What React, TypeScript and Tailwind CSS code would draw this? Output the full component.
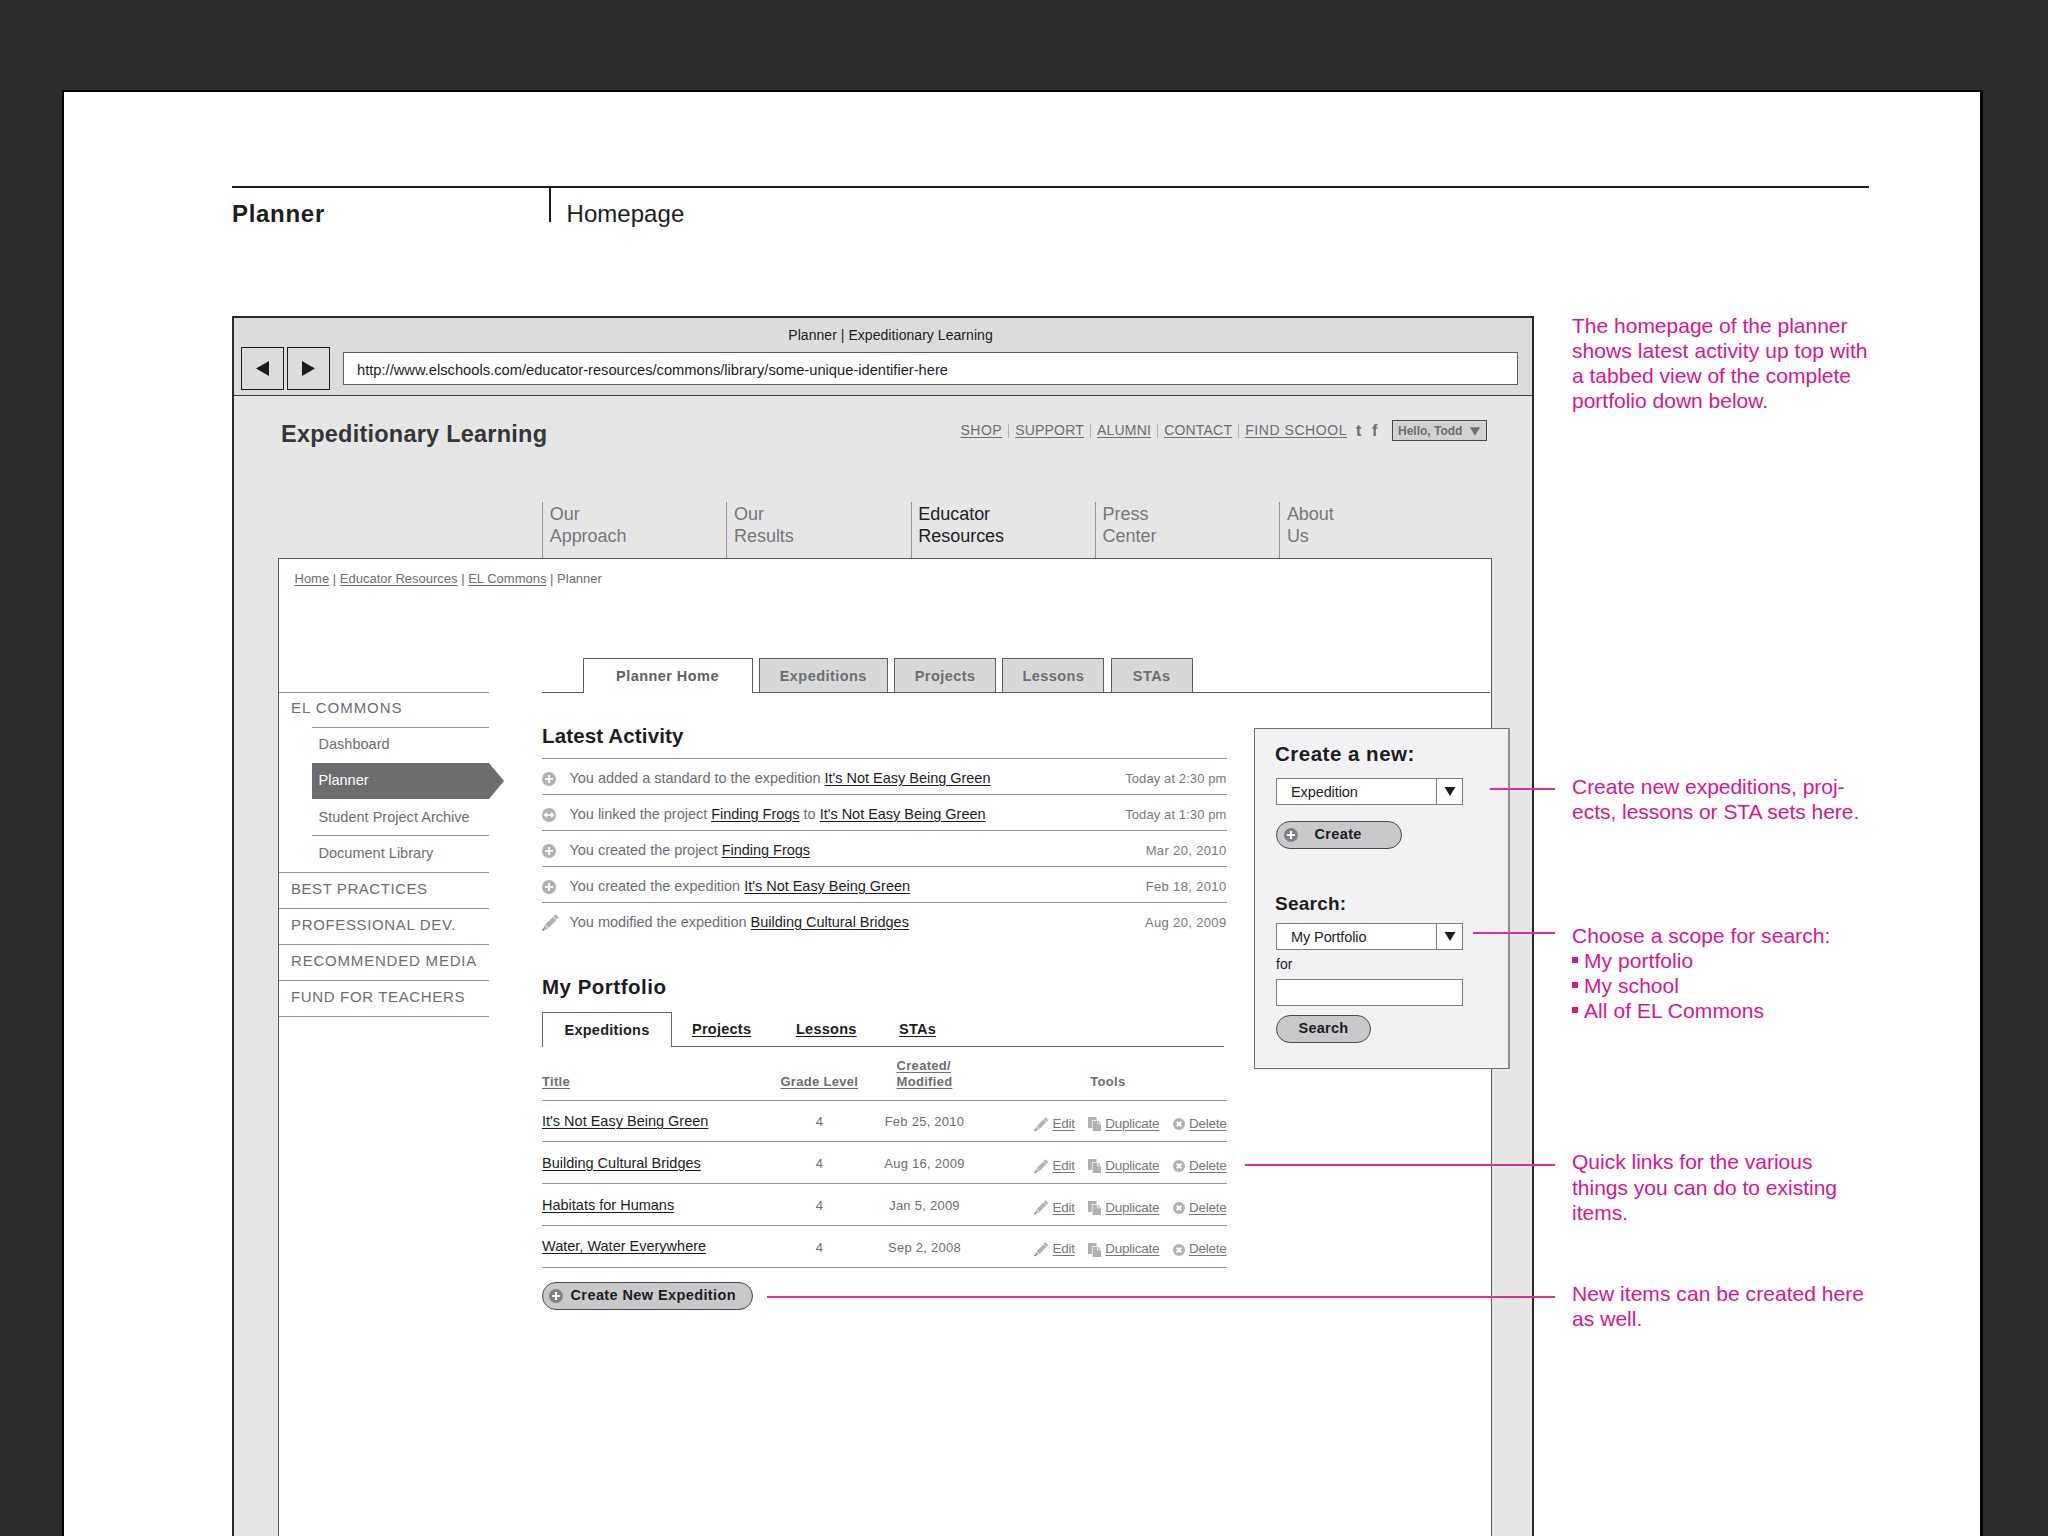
import type { ReactNode } from 'react'
import clsx from 'clsx'

const navItems = [
  ['Our', 'Approach'],
  ['Our', 'Results'],
  ['Educator', 'Resources'],
  ['Press', 'Center'],
  ['About', 'Us'],
]

const topLinks = [
  { label: 'SHOP', tracking: 'tracking-[0.5px]' },
  { label: 'SUPPORT', tracking: 'tracking-[0.2px]' },
  { label: 'ALUMNI', tracking: 'tracking-[0.2px]' },
  { label: 'CONTACT', tracking: 'tracking-[0.2px]' },
  { label: 'FIND SCHOOL', tracking: 'tracking-[0.56px]' },
]

const sections = [
  { label: 'BEST PRACTICES', tracking: 'tracking-[0.55px]' },
  { label: 'PROFESSIONAL DEV.', tracking: 'tracking-[0.65px]' },
  { label: 'RECOMMENDED MEDIA', tracking: 'tracking-[0.8px]' },
  { label: 'FUND FOR TEACHERS', tracking: 'tracking-[0.65px]' },
]

const mainTabs = [
  { label: 'Expeditions', width: 'w-[129px]' },
  { label: 'Projects', width: 'w-[102px]' },
  { label: 'Lessons', width: 'w-[102px]' },
  { label: 'STAs', width: 'w-[82px]' },
]

const portfolio = [
  { title: "It's Not Easy Being Green", grade: 4, date: 'Feb 25, 2010' },
  { title: 'Building Cultural Bridges', grade: 4, date: 'Aug 16, 2009' },
  { title: 'Habitats for Humans', grade: 4, date: 'Jan 5, 2009' },
  { title: 'Water, Water Everywhere', grade: 4, date: 'Sep 2, 2008' },
]

function PlusIcon({ className, fill = '#b1b1b4' }: { className?: string; fill?: string }) {
  return (
    <svg viewBox="0 0 14 14" className={className}>
      <circle cx="7" cy="7" r="7" fill={fill} />
      <path d="M7 3v8M3 7h8" stroke="#fff" strokeWidth="2.1" />
    </svg>
  )
}

function LinkIcon({ className }: { className?: string }) {
  return (
    <svg viewBox="0 0 14 14" className={className}>
      <circle cx="7" cy="7" r="7" fill="#b1b1b4" />
      <path d="M1.3 7 5 3.9V10.1Z M12.7 7 9 3.9V10.1Z" fill="#fff" />
      <path d="M4 7h6" stroke="#fff" strokeWidth="1.7" />
    </svg>
  )
}

function PencilIcon({ className }: { className?: string }) {
  return (
    <svg viewBox="0 0 16 16" className={className}>
      <path d="M12.6 0.3 15.8 3.2 14 5.2 10.8 2.3Z" fill="#b1b1b4" />
      <path d="M10.4 2.7 13.6 5.6 6.2 13.2 2.9 10.2Z" fill="#b1b1b4" />
      <path d="M2.5 10.7 5.6 13.6 2.2 15 1 13.8Z" fill="#b1b1b4" />
      <path d="M1 13.4 2.7 15 0 16Z" fill="#6d6e71" />
    </svg>
  )
}

function CopyIcon({ className }: { className?: string }) {
  return (
    <svg viewBox="0 0 13 14" className={className}>
      <path d="M0 0h8.500v3H3.900v8H0Z" fill="#b1b1b4" />
      <path d="M4.600 3.800H9.300V7.200H13V14H4.600Z" fill="#b1b1b4" />
      <path d="M10 3.800 13 6.500H10Z" fill="#b1b1b4" />
    </svg>
  )
}

function DeleteIcon({ className }: { className?: string }) {
  return (
    <svg viewBox="0 0 12 12" className={className}>
      <circle cx="6" cy="6" r="6" fill="#b1b1b4" />
      <path d="M3.700 3.700l4.600 4.600M8.300 3.700l-4.600 4.600" stroke="#fff" strokeWidth="2" />
    </svg>
  )
}

function DownArrow({ className }: { className?: string }) {
  return (
    <svg viewBox="0 0 12 10" className={className}>
      <path d="M0 0h12L6 10Z" fill="currentColor" />
    </svg>
  )
}

function Item({ children }: { children: ReactNode }) {
  return <span className="text-[#1d1d1f] underline decoration-1 underline-offset-2">{children}</span>
}

function ToolLink({ icon, label }: { icon: ReactNode; label: string }) {
  return (
    <span className="flex items-center gap-[4px]">
      {icon}
      <span className="underline decoration-1 underline-offset-2">{label}</span>
    </span>
  )
}

function ActivityRow({ icon, date, children }: { icon: ReactNode; date: string; children: ReactNode }) {
  const today = date.startsWith('Today')
  return (
    <li className="flex h-9 items-center border-t border-[#97979a] pt-[4px]">
      <span className="w-[27.5px]">{icon}</span>
      <span className="text-[14.5px] tracking-[-0.02px]">{children}</span>
      <span className={clsx('ml-auto text-[13px] text-[#77787b]', today ? 'tracking-[0.1px]' : 'tracking-[0.35px]')}>{date}</span>
    </li>
  )
}

function Select({ value }: { value: string }) {
  return (
    <div className="flex h-[27px] w-[187px] border border-[#808083] bg-white">
      <span className="flex-1 pl-[14px] text-[14.5px] leading-[27px] tracking-[-0.1px]">{value}</span>
      <span className="flex w-[26px] items-center justify-center border-l border-[#808083]">
        <DownArrow className="h-[9px] w-[12px]" />
      </span>
    </div>
  )
}

function Note({ className, line, children }: { className?: string; line?: string; children: ReactNode }) {
  return (
    <div className={clsx('relative', className)}>
      {line && <span className={clsx('absolute right-full mr-[17px] h-[2px] bg-[#dc3098]', line)} />}
      {children}
    </div>
  )
}

function Sidebar() {
  return (
    <nav className="mt-[34px] w-[209.5px] shrink-0 text-[#6d6e71]">
      <div className="h-[35px] border-t border-[#97979a] pl-[12px] text-[15px] leading-[29px] tracking-[0.95px]">EL COMMONS</div>
      <ul className="ml-[33px] text-[14.5px] tracking-[0.02px]">
        <li className="h-[36px] border-t border-[#97979a] pl-[6.5px] leading-[33px]">Dashboard</li>
        <li className="h-[36px] w-[192px] bg-[#6d6d70] pl-[6.5px] leading-[35px] text-white [clip-path:polygon(0_0,177px_0,100%_50%,177px_100%,0_100%)]">
          Planner
        </li>
        <li className="h-[36px] pl-[6.5px] leading-[36px]">Student Project Archive</li>
        <li className="h-[37px] border-t border-[#97979a] pl-[6.5px] leading-[35px]">Document Library</li>
      </ul>
      <ul className="border-b border-[#97979a] text-[15px]">
        {sections.map((s) => (
          <li key={s.label} className={clsx('h-[36.1px] border-t border-[#97979a] pl-[12px] leading-[32px]', s.tracking)}>{s.label}</li>
        ))}
      </ul>
    </nav>
  )
}

function Activity() {
  const plus = <PlusIcon className="mt-px size-[14px]" />
  return (
    <section className="text-[#6d6e71]">
      <h2 className="h-[65px] pt-[28px] text-[20.5px] leading-[30px] font-bold tracking-[0.15px] text-[#1d1d1f]">Latest Activity</h2>
      <ul className="h-[180px]">
        <ActivityRow icon={plus} date="Today at 2:30 pm">
          You added a standard to the expedition <Item>It's Not Easy Being Green</Item>
        </ActivityRow>
        <ActivityRow icon={<LinkIcon className="mt-px size-[14px]" />} date="Today at 1:30 pm">
          You linked the project <Item>Finding Frogs</Item> to <Item>It's Not Easy Being Green</Item>
        </ActivityRow>
        <ActivityRow icon={plus} date="Mar 20, 2010">
          You created the project <Item>Finding Frogs</Item>
        </ActivityRow>
        <ActivityRow icon={plus} date="Feb 18, 2010">
          You created the expedition <Item>It's Not Easy Being Green</Item>
        </ActivityRow>
        <ActivityRow icon={<PencilIcon className="size-[17px]" />} date="Aug 20, 2009">
          You modified the expedition <Item>Building Cultural Bridges</Item>
        </ActivityRow>
      </ul>
    </section>
  )
}

function Portfolio() {
  const cols = 'grid grid-cols-[226px_102.6px_107.8px_1fr]'
  return (
    <section className="text-[#6d6e71]">
      <h2 className="h-[74px] pt-[34px] text-[20.5px] leading-[30px] font-bold tracking-[0.5px] text-[#1d1d1f]">My Portfolio</h2>
      <div className="flex h-[35px] w-[682px] text-[14.5px] leading-[34px] font-bold tracking-[0.25px] text-[#1d1d1f]">
        <span className="w-[130px] border border-b-0 border-[#6b6b6e] text-center">Expeditions</span>
        <span className="flex flex-1 border-b border-[#6b6b6e] pl-[20px] leading-[35px] underline decoration-1 underline-offset-2">
          <span className="w-[104px]">Projects</span>
          <span className="w-[103px]">Lessons</span>
          <span>STAs</span>
        </span>
      </div>
      <div className={clsx(cols, 'h-[52.5px] items-end pb-[9px] text-[13px] leading-[16.3px] font-bold tracking-[0.3px]')}>
        <span className="underline decoration-1 underline-offset-2">Title</span>
        <span className="text-center underline decoration-1 underline-offset-2">Grade Level</span>
        <span className="text-center">
          <span className="inline-block text-left underline decoration-1 underline-offset-2">Created/<br />Modified</span>
        </span>
        <span className="pl-[11px] text-center">Tools</span>
      </div>
      <ul className="border-b border-[#97979a]">
        {portfolio.map((p) => (
          <li key={p.title} className={clsx(cols, 'h-[41.8px] items-center border-t border-[#97979a] pt-[2px]')}>
            <span className="text-[14.5px]"><Item>{p.title}</Item></span>
            <span className="text-center text-[13px]">{p.grade}</span>
            <span className="text-center text-[13px] tracking-[0.25px]">{p.date}</span>
            <span className="ml-auto flex w-[193.5px] justify-between pt-[4.5px] text-[13.5px] tracking-[-0.25px] text-[#77787b]">
              <ToolLink icon={<PencilIcon className="ml-px size-[14.5px]" />} label="Edit" />
              <ToolLink icon={<CopyIcon className="h-[14px] w-[13px]" />} label="Duplicate" />
              <ToolLink icon={<DeleteIcon className="size-[12px]" />} label="Delete" />
            </span>
          </li>
        ))}
      </ul>
      <button className="mt-[14px] flex h-[28px] w-[210.5px] items-center rounded-full border border-[#4a4a4c] bg-[#c9c9cb] pl-[6px] text-[14.5px] font-bold tracking-[0.4px] text-[#1d1d1f]">
        <PlusIcon className="mr-[7.5px] size-[14px]" fill="#808184" />
        Create New Expedition
      </button>
    </section>
  )
}

function CreateBox() {
  return (
    <aside className="mt-[35px] ml-[27px] h-[341px] w-[256px] shrink-0 border border-r-2 border-[#707073] border-r-[#8e8e91] bg-[#f2f2f4] pt-[10px] pl-[21.5px] text-[#1d1d1f]">
      <h3 className="-ml-px text-[20.5px] leading-[30px] font-bold tracking-[0.5px]">Create a new:</h3>
      <div className="mt-[9px]"><Select value="Expedition" /></div>
      <button className="mt-[16px] flex h-[28px] w-[125.5px] items-center rounded-full border border-[#4a4a4c] bg-[#c9c9cb] pl-[6.5px] text-[14.5px] font-bold tracking-[0.36px]">
        <PlusIcon className="mr-[17px] size-[14px]" fill="#808184" />
        Create
      </button>
      <h3 className="mt-[39.5px] -ml-px text-[19px] leading-[30px] font-bold tracking-[0.25px]">Search:</h3>
      <div className="mt-[4px]"><Select value="My Portfolio" /></div>
      <p className="h-[29px] text-[14px] leading-[28px]">for</p>
      <div className="h-[27px] w-[187px] border border-[#808083] bg-white" />
      <button className="mt-[9px] flex h-[28px] w-[95px] items-center justify-center rounded-full border border-[#4a4a4c] bg-[#c9c9cb] text-[14.5px] font-bold tracking-[0.25px]">
        Search
      </button>
    </aside>
  )
}

function BrowserWindow() {
  return (
    <div className="h-[1300px] w-[1302px] shrink-0 border-2 border-[#2b2b2b] bg-[#e6e6e6]">
      <div className="h-[78px] border-b border-[#3c3c3e] bg-[#dcdcdc] text-[#1d1d1f]">
        <p className="h-[29px] pl-[15px] text-center text-[14px] leading-[34px] tracking-[0.05px]">Planner | Expeditionary Learning</p>
        <div className="flex items-center pl-[6.5px]">
          <span className="mr-[3.5px] flex h-[43px] w-[43px] items-center justify-center border border-[#1d1d1f]">
            <svg viewBox="0 0 13 15" className="h-[15px] w-[13px]"><path d="M13 0v15L0 7.5Z" fill="#1d1d1f" /></svg>
          </span>
          <span className="mr-[13px] flex h-[43px] w-[43px] items-center justify-center border border-[#1d1d1f]">
            <svg viewBox="0 0 13 15" className="h-[15px] w-[13px]"><path d="M0 0v15L13 7.5Z" fill="#1d1d1f" /></svg>
          </span>
          <span className="h-[33px] w-[1175px] border border-[#5f5f61] bg-white pl-[13px] text-[14.7px] leading-[34px]">
            http://www.elschools.com/educator-resources/commons/library/some-unique-identifier-here
          </span>
        </div>
      </div>

      <header className="flex h-[75px] items-start justify-between pr-[45px] pl-[47px]">
        <h1 className="text-[23.5px] leading-[77px] font-bold tracking-[0.23px] text-[#363638]">Expeditionary Learning</h1>
        <div className="mt-[24px] flex h-[21px] items-center text-[14px] text-[#6d6e71]">
          <div className="flex items-center gap-[6px]">
            {topLinks.map((l, i) => (
              <div key={l.label} className="flex items-center gap-[6px]">
                {i > 0 && <i className="h-[14px] w-px bg-[#b5b5b8]" />}
                <span className={clsx('underline decoration-1 underline-offset-2', l.tracking)}>{l.label}</span>
              </div>
            ))}
          </div>
          <b className="ml-[9px] w-[16px] text-[16px] leading-[18px]">t</b>
          <b className="w-[20px] text-[16px] leading-[18px]">f</b>
          <button className="flex h-[21px] w-[95px] items-center justify-between border border-[#4a4a4c] bg-[#d2d2d4] pt-px pr-[6px] pl-[5px] text-[12px] font-bold">
            Hello, Todd
            <DownArrow className="h-[9px] w-[10px]" />
          </button>
        </div>
      </header>

      <nav className="mt-[31px] ml-[308px] flex h-[56px] text-[18px] leading-[22.4px] text-[#77787b]">
        {navItems.map(([a, b]) => (
          <div key={a + b} className={clsx('w-[184.3px] border-l border-[#97979a] pt-[0.5px] pl-[6.7px] tracking-[-0.03px]', a === 'Educator' && 'text-[#1d1d1f]')}>
            {a}<br />{b}
          </div>
        ))}
      </nav>

      <div className="ml-[44px] h-[1100px] w-[1213.5px] border border-[#5f5f61] bg-white">
        <p className="h-[99px] pl-[15.5px] text-[13px] leading-[40px] text-[#6d6e71]">
          <u className="underline-offset-2">Home</u> | <u className="underline-offset-2">Educator Resources</u> | <u className="underline-offset-2">EL Commons</u> | Planner
        </p>
        <div className="flex items-start">
          <Sidebar />
          <main className="ml-[53.5px] w-[948px]">
            <div className="flex h-[35px] text-[14.5px] leading-[34px] font-bold tracking-[0.45px] text-[#6d6e71]">
              <i className="w-[40.5px] border-b border-[#5f5f61]" />
              <span className="w-[170px] border border-b-0 border-[#5f5f61] text-center text-[#5f5f61]">Planner Home</span>
              {mainTabs.map((t) => (
                <div key={t.label} className="flex border-b border-[#5f5f61] pl-[6.3px]">
                  <span className={clsx('border border-b-0 border-[#5f5f61] bg-[#d8d8d9] text-center', t.width)}>{t.label}</span>
                </div>
              ))}
              <i className="flex-1 border-b border-[#5f5f61]" />
            </div>
            <div className="flex items-start">
              <div className="w-[684.5px] shrink-0">
                <Activity />
                <Portfolio />
              </div>
              <CreateBox />
            </div>
          </main>
        </div>
      </div>
    </div>
  )
}

export default function App() {
  return (
    <div className="h-[1536px] w-[2048px] overflow-hidden bg-[#2c2b2c] pt-[89.5px] pl-[62px] font-['Liberation_Sans',Arial,sans-serif]">
      <div className="h-[1500px] w-[1921px] border-2 border-r-[3px] border-black bg-white pt-[94.5px] pl-[168px]">
        <div className="flex h-[130px] w-[1637px] items-start border-t-2 border-[#1d1d1f] text-[24px] leading-[52px] text-[#1d1d1f]">
          <span className="w-[317px] font-bold tracking-[0.7px]">Planner</span>
          <span className="h-[34px] border-l-2 border-[#1d1d1f] pl-[15.5px] tracking-[0.05px]">Homepage</span>
        </div>
        <div className="flex">
          <BrowserWindow />
          <div className="-mt-[3px] ml-[38px] w-[340px] text-[21px] leading-[25.1px] text-[#dc1490]">
            <Note>
              The homepage of the planner<br />
              <span className="tracking-[0.08px]">shows latest activity up top with</span><br />
              a tabbed view of the complete<br />
              portfolio down below.
            </Note>
            <Note className="mt-[360.5px] tracking-[-0.02px]" line="top-[14px] w-[65px]">
              Create new expeditions, proj-<br />ects, lessons or STA sets here.
            </Note>
            <Note className="mt-[98.5px] tracking-[0.06px]" line="top-[9px] w-[82.5px]">
              Choose a scope for search:
              <ul>
                {['My portfolio', 'My school', 'All of EL Commons'].map((s) => (
                  <li key={s} className="flex items-center gap-[6px]">
                    <i className="size-[6px] bg-[#dc1490]" />{s}
                  </li>
                ))}
              </ul>
            </Note>
            <Note className="mt-[126.5px]" line="top-[14.5px] w-[310px]">
              Quick links for the various<br />things you can do to existing<br />items.
            </Note>
            <Note className="mt-[56.5px] tracking-[0.05px]" line="top-[14.5px] w-[788px]">
              New items can be created here<br />as well.
            </Note>
          </div>
        </div>
      </div>
    </div>
  )
}
